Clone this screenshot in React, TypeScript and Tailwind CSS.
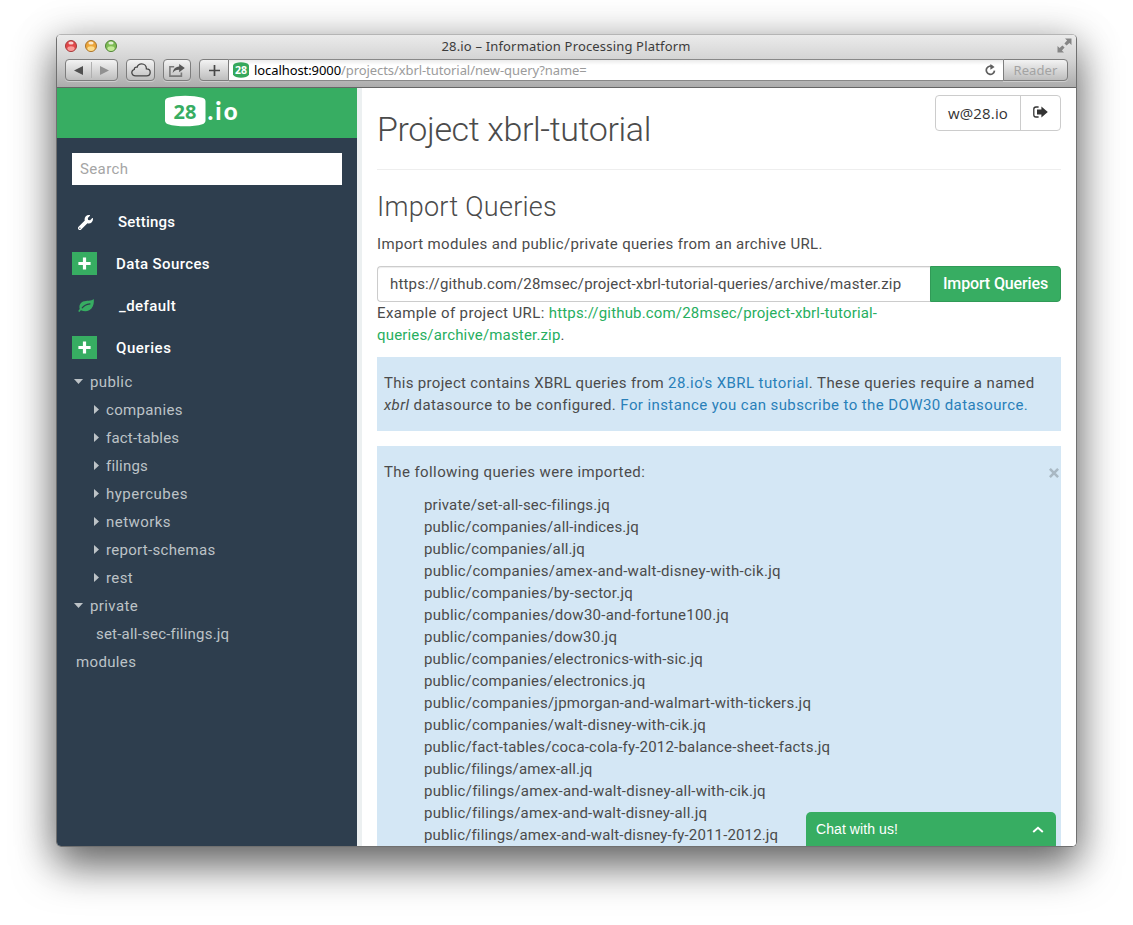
import type { ReactNode } from "react";
import { FaWrench } from "react-icons/fa";

const imported = [
  { path: "private/set-all-sec-filings.jq", track: "tracking-[0.19px]" },
  { path: "public/companies/all-indices.jq", track: "tracking-[0.17px]" },
  { path: "public/companies/all.jq", track: "tracking-[0.13px]" },
  { path: "public/companies/amex-and-walt-disney-with-cik.jq", track: "tracking-[0.28px]" },
  { path: "public/companies/by-sector.jq", track: "tracking-[0.2px]" },
  { path: "public/companies/dow30-and-fortune100.jq", track: "tracking-[0.26px]" },
  { path: "public/companies/dow30.jq", track: "tracking-[0.22px]" },
  { path: "public/companies/electronics-with-sic.jq", track: "tracking-[0.19px]" },
  { path: "public/companies/electronics.jq", track: "tracking-[0.18px]" },
  { path: "public/companies/jpmorgan-and-walmart-with-tickers.jq", track: "tracking-[0.23px]" },
  { path: "public/companies/walt-disney-with-cik.jq", track: "tracking-[0.22px]" },
  { path: "public/fact-tables/coca-cola-fy-2012-balance-sheet-facts.jq", track: "tracking-[0.2px]" },
  { path: "public/filings/amex-all.jq", track: "tracking-[0.11px]" },
  { path: "public/filings/amex-and-walt-disney-all-with-cik.jq", track: "tracking-[0.24px]" },
  { path: "public/filings/amex-and-walt-disney-all.jq", track: "tracking-[0.22px]" },
  { path: "public/filings/amex-and-walt-disney-fy-2011-2012.jq", track: "tracking-[0.15px]" },
];

const folders = [
  { name: "companies", track: "tracking-[0.34px]" },
  { name: "fact-tables", track: "tracking-[0.2px]" },
  { name: "filings", track: "tracking-[0.2px]" },
  { name: "hypercubes", track: "tracking-[0.5px]" },
  { name: "networks", track: "tracking-[0.45px]" },
  { name: "report-schemas", track: "tracking-[0.3px]" },
  { name: "rest", track: "tracking-[0.4px]" },
];

function Light({ rim, mid, glow }: { rim: string; mid: string; glow: string }) {
  return (
    <svg width="12" height="12" viewBox="0 0 12 12">
      <circle cx="6" cy="6" r="5.5" fill={mid} stroke={rim} />
      <ellipse cx="6" cy="8.6" rx="3.6" ry="2.3" fill={glow} opacity="0.8" />
      <ellipse cx="6" cy="2.9" rx="2.6" ry="1.5" fill="#fff" opacity="0.75" />
    </svg>
  );
}

function ToolButton({ className, children }: { className: string; children: ReactNode }) {
  return (
    <div
      className={`flex h-[22px] items-center justify-center border border-[#7d7d7d] bg-linear-to-b from-[#f3f3f3] to-[#bebebe] shadow-[0_1px_0_rgba(255,255,255,0.35)] ${className}`}
    >
      {children}
    </div>
  );
}

function Chrome() {
  return (
    <header className="h-[53px] shrink-0 border-b border-[#666] bg-linear-to-b from-[#ebebeb] via-[#d2d2d2] to-[#acacac]">
      <div className="flex h-[23px] items-center pr-[4px] pb-[2px] pl-[8px]">
        <div className="flex w-[80px] gap-[8px]">
          <Light rim="#a33a3a" mid="#e2474a" glow="#ffb0ac" />
          <Light rim="#a8722a" mid="#eda63a" glow="#ffe9a0" />
          <Light rim="#4f8236" mid="#7fbd55" glow="#d3f5a8" />
        </div>
        <div className="flex-1 pr-[13px] text-center font-['Noto_Sans',sans-serif] text-[13px] leading-[22px] tracking-[0.17px] text-[#3c3c3c]">
          28.io – Information Processing Platform
        </div>
        <div className="flex w-[72px] justify-end">
          <svg width="15" height="15" viewBox="0 0 15 15" fill="#858585">
            <path d="M8 0.5H14.5V7L12.4 4.9L9.6 7.6L7.4 5.4L10.1 2.6Z" />
            <path d="M7 14.5H0.5V8L2.6 10.1L5.4 7.4L7.6 9.6L4.9 12.4Z" />
          </svg>
        </div>
      </div>
      <div className="flex items-center pt-[1px] pr-[8px] pl-[8px]">
        <ToolButton className="w-[53px] rounded-[4px]">
          <div className="flex flex-1 justify-center">
            <svg width="9" height="9" viewBox="0 0 9 9">
              <path d="M0 4.5L9 0V9Z" fill="#505050" />
            </svg>
          </div>
          <div className="h-[16px] w-px bg-[#b0b0b0]" />
          <div className="flex flex-1 justify-center">
            <svg width="9" height="9" viewBox="0 0 9 9">
              <path d="M9 4.5L0 0V9Z" fill="#919191" />
            </svg>
          </div>
        </ToolButton>
        <ToolButton className="ml-[8px] w-[29px] rounded-[4px]">
          <svg width="20" height="14" viewBox="0 0 20 14" fill="none" stroke="#474747" strokeWidth="1.3">
            <path d="M4.6 12.9C2.4 12.9 0.8 11.5 0.8 9.6C0.8 8 1.9 6.9 3.3 6.5C3.2 4.9 4.6 3.8 6.1 4.2C6.8 2.2 8.4 0.9 10.6 0.9C13.4 0.9 15.4 3 15.4 5.8C17.6 5.8 19.2 7.3 19.2 9.3C19.2 11.4 17.7 12.9 15.6 12.9Z" />
          </svg>
        </ToolButton>
        <ToolButton className="ml-[8px] w-[28px] rounded-[4px]">
          <svg width="16" height="13" viewBox="0 0 16 13">
            <path d="M5.2 2.7H0.9V12.1H12.4V8.6" fill="none" stroke="#7a7a7a" strokeWidth="1.6" />
            <path d="M10.2 0L15.8 4.1L10.2 8.2V5.8C7.2 5.7 5.3 6.6 3.7 9C4.1 5.3 6.1 2.9 10.2 2.5Z" fill="#565656" />
          </svg>
        </ToolButton>
        <ToolButton className="ml-[8px] w-[30px] rounded-l-[4px]">
          <svg width="11" height="11" viewBox="0 0 11 11">
            <path d="M5.5 0V11M0 5.5H11" stroke="#474747" strokeWidth="1.7" />
          </svg>
        </ToolButton>
        <div className="flex h-[22px] flex-1 items-center border-y border-[#888] bg-linear-to-b from-[#ebebeb] via-white via-25% to-white pr-[7px] pl-[4px]">
          <svg width="16" height="16" viewBox="0 0 16 16">
            <path d="M0 3.2C2 -0.6 14 -0.6 16 3.2V12.8C14 16.6 2 16.6 0 12.8Z" fill="#36a85c" />
            <text x="8" y="12" textAnchor="middle" fontSize="10.5" fontWeight="700" fontFamily="Noto Sans" fill="#fff">
              28
            </text>
          </svg>
          <div className="ml-[5px] flex flex-1 font-['Noto_Sans',sans-serif] text-[13px] leading-5 tracking-[-0.08px] whitespace-pre">
            <span className="text-black">localhost:9000</span>
            <span className="text-[#9b9b9b]">/projects/xbrl-tutorial/new-query?name=</span>
          </div>
          <svg width="11" height="12" viewBox="0 0 11 12">
            <path d="M7.8 2.9A4.1 4.1 0 1 0 9.5 6.6" fill="none" stroke="#5f5f5f" strokeWidth="1.7" />
            <path d="M5.4 0L9.6 2.9L5.4 5.8Z" fill="#5f5f5f" />
          </svg>
        </div>
        <ToolButton className="w-[65px] rounded-r-[4px]">
          <span className="font-['Noto_Sans',sans-serif] text-[13px] leading-5 tracking-[0.1px] text-[#a3a3a3]">Reader</span>
        </ToolButton>
      </div>
    </header>
  );
}

function PlusBox() {
  return (
    <div className="mb-[1px] flex h-[23px] w-[25px] items-center justify-center bg-[#37ad62] pb-[1px]">
      <svg width="13" height="13" viewBox="0 0 13 13">
        <path d="M6.5 0.4V12.6M0.4 6.5H12.6" stroke="#fff" strokeWidth="3.2" />
      </svg>
    </div>
  );
}

function Folder({ name, open, track }: { name: string; open?: boolean; track: string }) {
  return (
    <div className={`flex h-7 items-center ${open ? "pl-[17px]" : "pl-[37px]"} ${track}`}>
      {open ? (
        <svg width="9" height="5" viewBox="0 0 9 5" className="mr-[7px] mb-px">
          <path d="M0 0H9L4.5 5Z" fill="#bdc3c7" />
        </svg>
      ) : (
        <svg width="5" height="9" viewBox="0 0 5 9" className="mr-[7px] mb-px">
          <path d="M0 0V9L5 4.5Z" fill="#bdc3c7" />
        </svg>
      )}
      {name}
    </div>
  );
}

function Sidebar() {
  return (
    <aside className="flex w-[300px] shrink-0 flex-col bg-[#2e3e4e]">
      <div className="flex h-[50px] items-center justify-center bg-[#37ad62] pr-[10px] pb-[4px]">
        <svg width="74" height="32" viewBox="0 0 74 32">
          <path d="M0 6.5C0 4.5 1.2 3.4 3.2 2.8C12 0 28.5 0 37.3 2.8C39.3 3.4 40.5 4.5 40.5 6.5V25.5C40.5 27.5 39.3 28.6 37.3 29.2C28.5 32 12 32 3.2 29.2C1.2 28.6 0 27.5 0 25.5Z" fill="#fff" />
          <text x="8.6" y="23.5" fontSize="20" fontWeight="700" fontFamily="Noto Sans" fill="#37ad62">
            28
          </text>
          <text x="42.5" y="24.5" fontSize="24" fontWeight="900" fontFamily="Lato" fill="#fff" textLength="30">
            .io
          </text>
        </svg>
      </div>
      <div className="px-[15px] pt-[15px]">
        <div className="h-8 bg-white pl-2 text-[15px] leading-8 tracking-[0.38px] text-[#a5a5a5]">Search</div>
      </div>
      <nav className="mt-[16px] text-[15px] font-medium text-white">
        <div className="flex h-[42px] items-center pl-[21px] tracking-[0.2px]">
          <FaWrench size={15} />
          <span className="ml-[25px]">Settings</span>
        </div>
        <div className="flex h-[42px] items-center pl-[15px] tracking-[0.38px]">
          <PlusBox />
          <span className="ml-[19px]">Data Sources</span>
        </div>
        <div className="flex h-[42px] items-center pl-[21px] tracking-[0.42px]">
          <svg width="16" height="13" viewBox="0 0 16 13" className="mb-[2px]">
            <path
              d="M15.7 0C16.4 4.6 15 9.3 11.2 11.3C8.4 12.7 5.2 12.2 3 11.2C2.3 11.7 1.9 12.4 1.5 13L0.2 12.2C0.6 11.3 1.2 10.6 1.8 10C0.6 7 2.1 4 5 2.6C8.5 1 13.3 2.6 15.7 0Z"
              fill="#37ad62"
            />
            <path d="M4.2 8.8C6.2 6.2 8.8 5.4 12 4.9" fill="none" stroke="#2e3e4e" strokeWidth="1.1" strokeLinecap="round" />
          </svg>
          <span className="ml-[25px]">_default</span>
        </div>
        <div className="flex h-[42px] items-center pl-[15px] tracking-[0.55px]">
          <PlusBox />
          <span className="ml-[19px]">Queries</span>
        </div>
      </nav>
      <div className="mt-[-1px] text-[15px] text-[#bdc3c7]">
        <Folder name="public" open track="tracking-[0.4px]" />
        {folders.map((f) => (
          <Folder key={f.name} name={f.name} track={f.track} />
        ))}
        <Folder name="private" open track="tracking-[0.4px]" />
        <div className="flex h-7 items-center pl-[39px] tracking-[0.21px]">set-all-sec-filings.jq</div>
        <div className="flex h-7 items-center pl-[19px] tracking-[0.35px]">modules</div>
      </div>
    </aside>
  );
}

function Content() {
  return (
    <main className="relative flex-1 bg-white pr-[15px] pl-[15px] text-[15px] leading-[22px] text-[#4b4b4b]">
      <div className="flex h-[82px] items-start justify-between border-b border-[#eee]">
        <h1 className="mt-[20px] text-[34px] leading-[42px] font-light tracking-[-0.37px]">Project xbrl-tutorial</h1>
        <div className="mt-[7px] flex h-[36px] w-[126px] rounded-[4px] border border-[#ccc] text-[#333]">
          <div className="flex w-[85px] items-center justify-center border-r border-[#ccc] font-['Open_Sans',sans-serif] text-[15px] tracking-[0.15px]">
            w@28.io
          </div>
          <div className="flex flex-1 items-center justify-center pb-[2px]">
            <svg width="15" height="12" viewBox="0 0 15 12">
              <path d="M5.6 1H3C1.6 1 0.8 1.8 0.8 3.2V8.8C0.8 10.2 1.6 11 3 11H5.6" fill="none" stroke="#333" strokeWidth="1.3" />
              <path d="M4 3.6H8.4V0.6L14.8 6L8.4 11.4V8.4H4Z" fill="#333" />
            </svg>
          </div>
        </div>
      </div>
      <h2 className="mt-[20px] text-[27px] leading-[34px] font-light tracking-[0.28px]">Import Queries</h2>
      <p className="mt-[9px] tracking-[0.33px]">Import modules and public/private queries from an archive URL.</p>
      <div className="mt-[11px] flex h-[36px]">
        <div className="flex-1 rounded-l-[4px] border border-r-0 border-[#ccc] pl-[12px] leading-[34px] tracking-[0.16px] shadow-[inset_0_1px_1px_rgba(0,0,0,0.075)]">
          https://github.com/28msec/project-xbrl-tutorial-queries/archive/master.zip
        </div>
        <div className="w-[131px] rounded-r-[4px] border border-[#319a57] bg-[#37ad62] text-center text-[16px] leading-[34px] font-medium tracking-[-0.13px] text-white">
          Import Queries
        </div>
      </div>
      <p className="tracking-[0.37px]">
        Example of project URL:{" "}
        <span className="tracking-[0.17px] text-[#27ae60]">
          https://github.com/28msec/project-xbrl-tutorial-
          <br />
          queries/archive/master.zip
        </span>
        .
      </p>
      <div className="mt-[11px] h-[74px] bg-[#d4e7f5] pt-[15px] pl-[7px] tracking-[0.31px]">
        This project contains XBRL queries from <span className="tracking-[0.4px] text-[#2980b9]">28.io's XBRL tutorial</span>
        <span className="tracking-[0.42px]">. These queries require a named</span>
        <br />
        <span className="tracking-[0.4px]">
          <i>xbrl</i> datasource to be configured.{" "}
        </span>
        <span className="tracking-[0.41px] text-[#2980b9]">For instance you can subscribe to the DOW30 datasource.</span>
      </div>
      <div className="mt-[15px] h-[400px] bg-[#d4e7f5] pt-[15px] pl-[7px]">
        <div className="flex items-center justify-between pr-[2px]">
          <span className="tracking-[0.4px]">The following queries were imported:</span>
          <svg width="10" height="10" viewBox="0 0 10 10" className="mt-[2px]">
            <path d="M0.9 0.9L9.1 9.1M9.1 0.9L0.9 9.1" stroke="#a9b8c3" strokeWidth="2.6" />
          </svg>
        </div>
        <ul className="mt-[11px] pl-[40px]">
          {imported.map((q) => (
            <li key={q.path} className={q.track}>
              {q.path}
            </li>
          ))}
        </ul>
      </div>
      <div className="absolute right-[20px] bottom-0 flex h-[34px] w-[250px] items-center justify-between rounded-t-[5px] bg-[#37ad62] pr-[12px] pl-[10px] font-['Liberation_Sans',sans-serif] text-[14px] tracking-[0.08px] text-white">
        Chat with us!
        <svg width="12" height="7" viewBox="0 0 12 7">
          <path d="M1.2 6L6 1.8L10.8 6" fill="none" stroke="#fff" strokeWidth="2" />
        </svg>
      </div>
    </main>
  );
}

export default function App() {
  return (
    <div className="h-[925px] w-[1133px] overflow-hidden bg-white pt-[34px] pl-[56px] font-[Roboto,sans-serif]">
      <div className="flex h-[813px] w-[1021px] flex-col overflow-hidden rounded-[5px] border border-[#707070] border-t-[#b5b5b5] shadow-[0_20px_40px_rgba(0,0,0,0.5),0_5px_40px_rgba(0,0,0,0.25)]">
        <Chrome />
        <div className="flex min-h-0 flex-1 overflow-hidden">
          <Sidebar />
          <div className="w-[5px] shrink-0 bg-[#ecf0f1]" />
          <Content />
        </div>
      </div>
    </div>
  );
}
